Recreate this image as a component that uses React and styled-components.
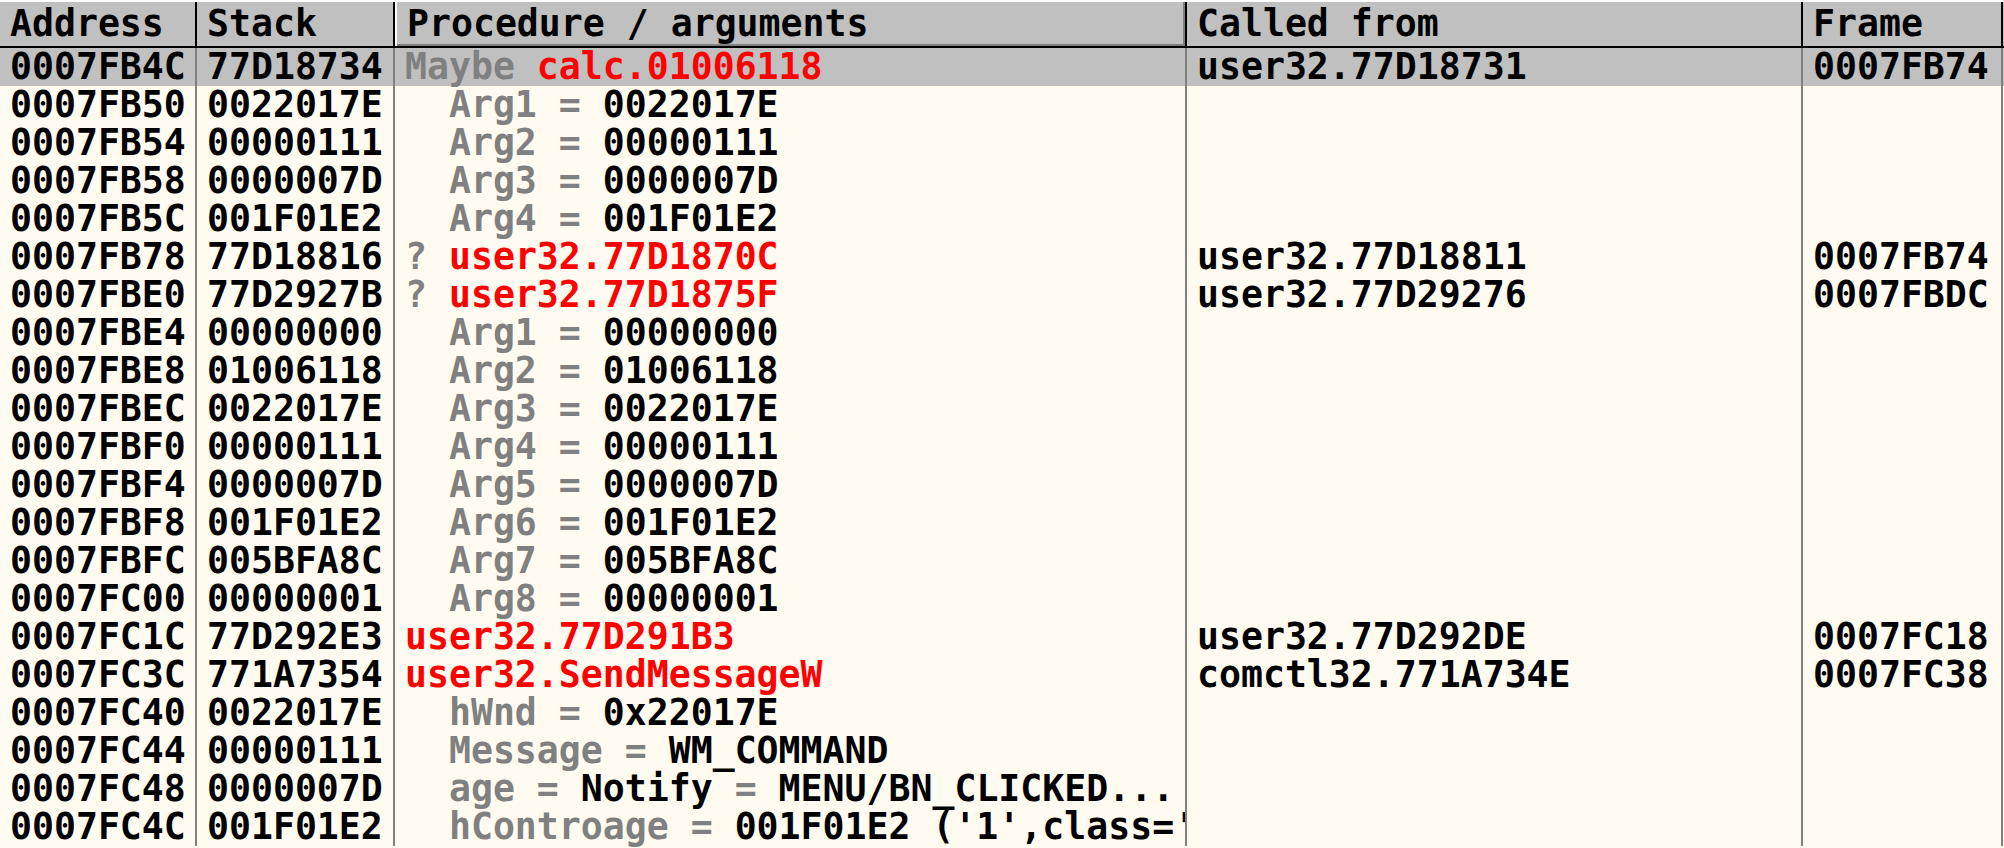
import React from "react";
import styled, { createGlobalStyle, css } from "styled-components";

const GlobalStyle = createGlobalStyle`
  html, body { margin: 0; padding: 0; background: #fffbf0; overflow: hidden; }
  #root { width: 2004px; height: 848px; }
`;

const COLS = "197px 198px 792px 616px 200px";

const Window = styled.div`
  width: 2004px;
  height: 848px;
  background: #fffbf0;
  font-family: "DejaVu Sans Mono", "Liberation Mono", monospace;
  font-weight: bold;
  font-size: 36.5px;
  color: #000;
  overflow: hidden;
`;

const Header = styled.div`
  display: grid;
  grid-template-columns: ${COLS};
  border-top: 2px solid #ffffff;
  border-bottom: 2px solid #000;
  background: #c0c0c0;
  height: 44px;
`;

const HeadCell = styled.div`
  border-right: 2px solid #000;
  padding-left: 10px;
  line-height: 44px;
  white-space: pre;
  overflow-x: clip;
  overflow-y: visible;
  ${(p) =>
    p.$raised &&
    css`
      box-shadow: inset 2px 0 0 #ffffff, inset -2px -2px 0 #808080;
      padding-left: 12px;
    `}
`;

const Row = styled.div`
  display: grid;
  grid-template-columns: ${COLS};
  height: 38px;
  background: ${(p) => (p.$selected ? "#c0c0c0" : "transparent")};
`;

const Cell = styled.div`
  border-right: 2px solid #808080;
  padding-left: 10px;
  line-height: 38px;
  white-space: pre;
  overflow-x: clip;
  overflow-y: visible;
`;

const Muted = styled.span`
  color: #808080;
`;

const Hot = styled.span`
  color: #ff0000;
`;

const rows = [
  { a: "0007FB4C", s: "77D18734", p: [["m", "Maybe "], ["r", "calc.01006118"]], c: "user32.77D18731", f: "0007FB74", sel: true },
  { a: "0007FB50", s: "0022017E", p: [["m", "  Arg1 = "], ["k", "0022017E"]] },
  { a: "0007FB54", s: "00000111", p: [["m", "  Arg2 = "], ["k", "00000111"]] },
  { a: "0007FB58", s: "0000007D", p: [["m", "  Arg3 = "], ["k", "0000007D"]] },
  { a: "0007FB5C", s: "001F01E2", p: [["m", "  Arg4 = "], ["k", "001F01E2"]] },
  { a: "0007FB78", s: "77D18816", p: [["m", "? "], ["r", "user32.77D1870C"]], c: "user32.77D18811", f: "0007FB74" },
  { a: "0007FBE0", s: "77D2927B", p: [["m", "? "], ["r", "user32.77D1875F"]], c: "user32.77D29276", f: "0007FBDC" },
  { a: "0007FBE4", s: "00000000", p: [["m", "  Arg1 = "], ["k", "00000000"]] },
  { a: "0007FBE8", s: "01006118", p: [["m", "  Arg2 = "], ["k", "01006118"]] },
  { a: "0007FBEC", s: "0022017E", p: [["m", "  Arg3 = "], ["k", "0022017E"]] },
  { a: "0007FBF0", s: "00000111", p: [["m", "  Arg4 = "], ["k", "00000111"]] },
  { a: "0007FBF4", s: "0000007D", p: [["m", "  Arg5 = "], ["k", "0000007D"]] },
  { a: "0007FBF8", s: "001F01E2", p: [["m", "  Arg6 = "], ["k", "001F01E2"]] },
  { a: "0007FBFC", s: "005BFA8C", p: [["m", "  Arg7 = "], ["k", "005BFA8C"]] },
  { a: "0007FC00", s: "00000001", p: [["m", "  Arg8 = "], ["k", "00000001"]] },
  { a: "0007FC1C", s: "77D292E3", p: [["r", "user32.77D291B3"]], c: "user32.77D292DE", f: "0007FC18" },
  { a: "0007FC3C", s: "771A7354", p: [["r", "user32.SendMessageW"]], c: "comctl32.771A734E", f: "0007FC38" },
  { a: "0007FC40", s: "0022017E", p: [["m", "  hWnd = "], ["k", "0x22017E"]] },
  { a: "0007FC44", s: "00000111", p: [["m", "  Message = "], ["k", "WM_COMMAND"]] },
  { a: "0007FC48", s: "0000007D", p: [["m", "  age = "], ["k", "Notify"], ["m", " = "], ["k", "MENU/BN_CLICKED..."]] },
  { a: "0007FC4C", s: "001F01E2", p: [["m", "  hControage = "], ["k", "001F01E2 ('1',class='Button',parent=0022017E)"]] },
];

function Segment({ kind, text }) {
  if (kind === "m") return <Muted>{text}</Muted>;
  if (kind === "r") return <Hot>{text}</Hot>;
  return <span>{text}</span>;
}

export default function App() {
  return (
    <>
      <GlobalStyle />
      <Window>
        <Header>
          <HeadCell>Address</HeadCell>
          <HeadCell>Stack</HeadCell>
          <HeadCell $raised>Procedure / arguments</HeadCell>
          <HeadCell>Called from</HeadCell>
          <HeadCell>Frame</HeadCell>
        </Header>
        {rows.map((r) => (
          <Row key={r.a} $selected={r.sel}>
            <Cell>{r.a}</Cell>
            <Cell>{r.s}</Cell>
            <Cell>
              {r.p.map(([k, t], i) => (
                <Segment key={i} kind={k} text={t} />
              ))}
            </Cell>
            <Cell>{r.c || ""}</Cell>
            <Cell>{r.f || ""}</Cell>
          </Row>
        ))}
      </Window>
    </>
  );
}
